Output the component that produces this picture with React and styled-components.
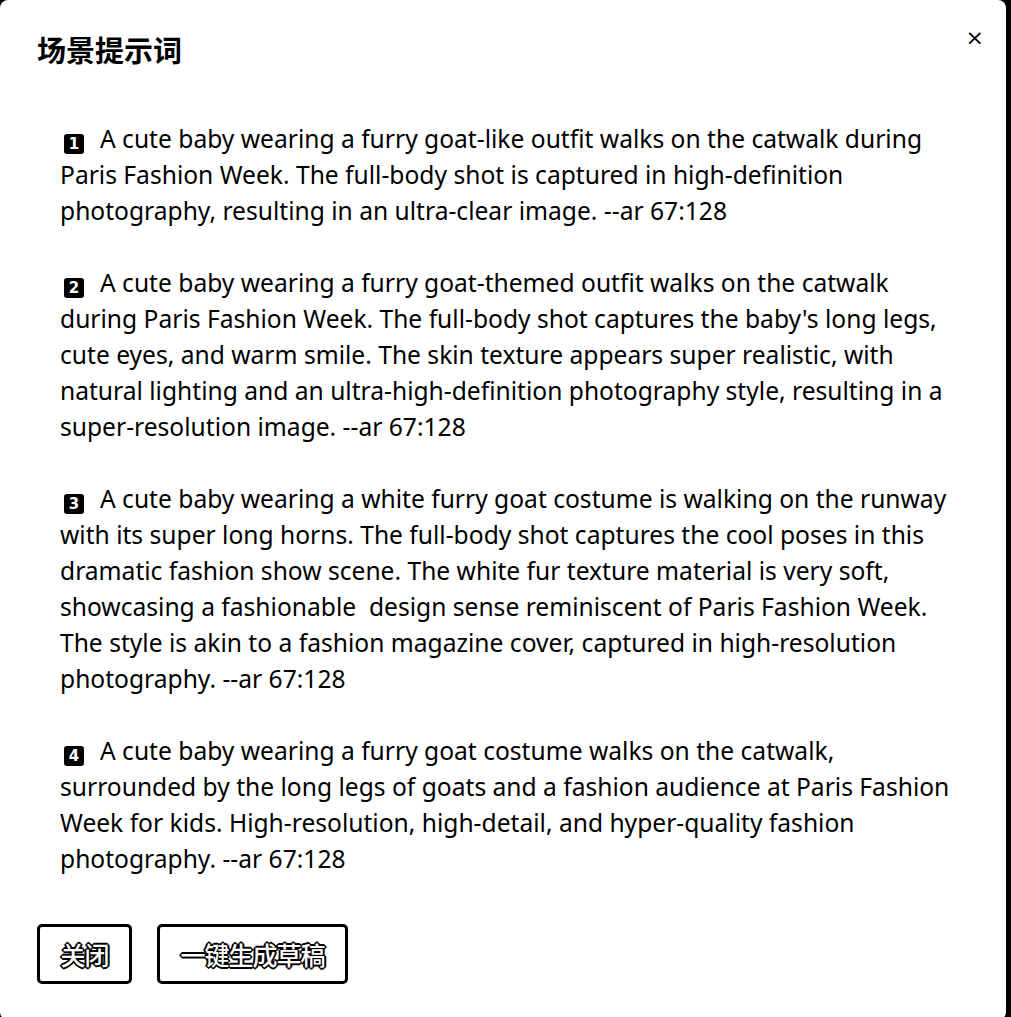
import React from 'react';
import styled, { createGlobalStyle } from 'styled-components';

const GlobalStyle = createGlobalStyle`
  html, body {
    margin: 0;
    padding: 0;
    background: #000;
  }
`;

const prompts = [
  {
    num: '1',
    lines: [
      'A cute baby wearing a furry goat-like outfit walks on the catwalk during',
      'Paris Fashion Week. The full-body shot is captured in high-definition',
      'photography, resulting in an ultra-clear image. --ar 67:128',
    ],
  },
  {
    num: '2',
    lines: [
      'A cute baby wearing a furry goat-themed outfit walks on the catwalk',
      "during Paris Fashion Week. The full-body shot captures the baby's long legs,",
      'cute eyes, and warm smile. The skin texture appears super realistic, with',
      'natural lighting and an ultra-high-definition photography style, resulting in a',
      'super-resolution image. --ar 67:128',
    ],
  },
  {
    num: '3',
    lines: [
      'A cute baby wearing a white furry goat costume is walking on the runway',
      'with its super long horns. The full-body shot captures the cool poses in this',
      'dramatic fashion show scene. The white fur texture material is very soft,',
      'showcasing a fashionable  design sense reminiscent of Paris Fashion Week.',
      'The style is akin to a fashion magazine cover, captured in high-resolution',
      'photography. --ar 67:128',
    ],
  },
  {
    num: '4',
    lines: [
      'A cute baby wearing a furry goat costume walks on the catwalk,',
      'surrounded by the long legs of goats and a fashion audience at Paris Fashion',
      'Week for kids. High-resolution, high-detail, and hyper-quality fashion',
      'photography. --ar 67:128',
    ],
  },
];

const App = () => {
  return (
    <>
      <GlobalStyle />
      <Screen>
        <Dialog>
          <Header>
            <Title>场景提示词</Title>
            <CloseX>×</CloseX>
          </Header>
          <Body>
            {prompts.map((p) => (
              <Paragraph key={p.num}>
                {p.lines.map((line, i) => (
                  <Line key={i}>
                    {i === 0 && <Keycap>{p.num}</Keycap>}
                    {line}
                  </Line>
                ))}
              </Paragraph>
            ))}
          </Body>
          <Footer>
            <Button>关闭</Button>
            <Button wide>一键生成草稿</Button>
          </Footer>
        </Dialog>
      </Screen>
    </>
  );
};

export default App;

const Screen = styled.div`
  width: 1011px;
  height: 1017px;
  background: #000;
  overflow: hidden;
`;

const Dialog = styled.div`
  width: 1006px;
  height: 1020px;
  background: #fff;
  border-radius: 8px;
  display: flex;
  flex-direction: column;
  box-sizing: border-box;
  padding: 0 0 0 37px;
  font-family: 'Segoe UI', 'Noto Sans', 'Noto Sans CJK SC', sans-serif;
  color: #000;
`;

const Header = styled.div`
  display: flex;
  align-items: flex-start;
  justify-content: space-between;
  padding-top: 28px;
  padding-right: 22px;
`;

const Title = styled.h2`
  margin: 0;
  font-family: 'Noto Sans CJK SC', sans-serif;
  font-size: 29px;
  font-weight: 700;
  line-height: 42px;
`;

const CloseX = styled.span`
  font-family: 'DejaVu Sans', sans-serif;
  font-size: 22px;
  line-height: 22px;
  margin-top: -1px;
`;

const Body = styled.div`
  padding: 51px 0 0 23px;
  display: flex;
  flex-direction: column;
  gap: 36px;
`;

const Paragraph = styled.div`
  display: flex;
  flex-direction: column;
`;

const Line = styled.div`
  font-size: 24.6px;
  line-height: 36px;
  white-space: pre;
`;

const Keycap = styled.span`
  display: inline-block;
  width: 20px;
  height: 20px;
  margin: 0 16px 0 4px;
  vertical-align: -1px;
  background: #000;
  color: #fff;
  border-radius: 3px;
  font-family: 'DejaVu Sans', sans-serif;
  font-weight: 700;
  font-size: 15px;
  line-height: 20px;
  text-align: center;
`;

const Footer = styled.div`
  display: flex;
  gap: 25px;
  margin-top: 47px;
`;

const Button = styled.button`
  height: 60px;
  width: ${(p) => (p.wide ? '191px' : '95px')};
  border: 3px solid #000;
  border-radius: 5px;
  background: #fff;
  box-sizing: border-box;
  font-family: 'Noto Sans CJK SC', sans-serif;
  font-size: 25px;
  font-weight: 500;
  color: #fff;
  letter-spacing: -1px;
  text-shadow: -1px -1px 0 #000, 1px -1px 0 #000, -1px 1px 0 #000, 1px 1px 0 #000,
    0 -2px 0 #000, 0 2px 0 #000, -2px 0 0 #000, 2px 0 0 #000;
  padding: 0;
`;
